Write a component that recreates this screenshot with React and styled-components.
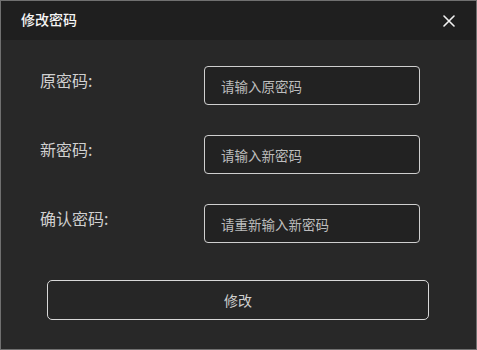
import React from 'react';
import styled, { createGlobalStyle } from 'styled-components';

const GlobalStyle = createGlobalStyle`
  html, body {
    margin: 0;
    padding: 0;
    background: #282828;
  }
  * { box-sizing: border-box; }
`;

const FONT = `"Noto Sans CJK SC", "Noto Sans", sans-serif`;

const fields = [
  { label: '原密码:', placeholder: '请输入原密码' },
  { label: '新密码:', placeholder: '请输入新密码' },
  { label: '确认密码:', placeholder: '请重新输入新密码' },
];

function App() {
  return (
    <>
      <GlobalStyle />
      <Dialog>
        <Header>
          <Title>修改密码</Title>
          <CloseButton aria-label="关闭">
            <svg width="12" height="12" viewBox="0 0 12 12">
              <path d="M1 1 L11 11 M11 1 L1 11" stroke="#f2f2f2" strokeWidth="1.6" strokeLinecap="round" />
            </svg>
          </CloseButton>
        </Header>
        <Body>
          {fields.map(f => (
            <Row key={f.label}>
              <Label>{f.label}</Label>
              <Input type="password" placeholder={f.placeholder} />
            </Row>
          ))}
          <SubmitButton>修改</SubmitButton>
        </Body>
      </Dialog>
    </>
  );
}

export default App;

const Dialog = styled.div`
  width: 477px;
  height: 350px;
  background: #282828;
  border: 1px solid #707070;
  display: flex;
  flex-direction: column;
  font-family: ${FONT};
`

const Header = styled.div`
  height: 39px;
  background: #1f1f1f;
  display: flex;
  align-items: center;
  justify-content: space-between;
  padding: 0 21px 0 20px;
`

const Title = styled.div`
  color: #f5f5f5;
  font-size: 14px;
  font-weight: 500;
  margin-top: -4px;
`

const CloseButton = styled.button`
  background: none;
  border: none;
  padding: 0;
  display: flex;
  cursor: pointer;
`

const Body = styled.div`
  flex: 1;
  display: flex;
  flex-direction: column;
  padding: 26px 0 0 0;
`

const Row = styled.div`
  display: flex;
  align-items: flex-start;
  height: 39px;
  margin-bottom: 30px;
`

const Label = styled.div`
  flex: 0 0 203px;
  padding-left: 39px;
  padding-top: 2px;
  color: #d0d0d0;
  font-size: 16px;
`

const Input = styled.input`
  width: 216px;
  height: 39px;
  background: #222222;
  border: 1px solid #cfcfcf;
  border-radius: 4px;
  padding: 0 16px;
  color: #e0e0e0;
  font-family: ${FONT};
  font-size: 13.5px;
  outline: none;

  &::placeholder {
    color: #bdbdbd;
  }
`

const SubmitButton = styled.button`
  margin: 7px 0 0 46px;
  width: 382px;
  height: 40px;
  background: #262626;
  border: 1px solid #d8d8d8;
  border-radius: 5px;
  color: #cfcfcf;
  font-family: ${FONT};
  font-size: 14px;
  cursor: pointer;
`
